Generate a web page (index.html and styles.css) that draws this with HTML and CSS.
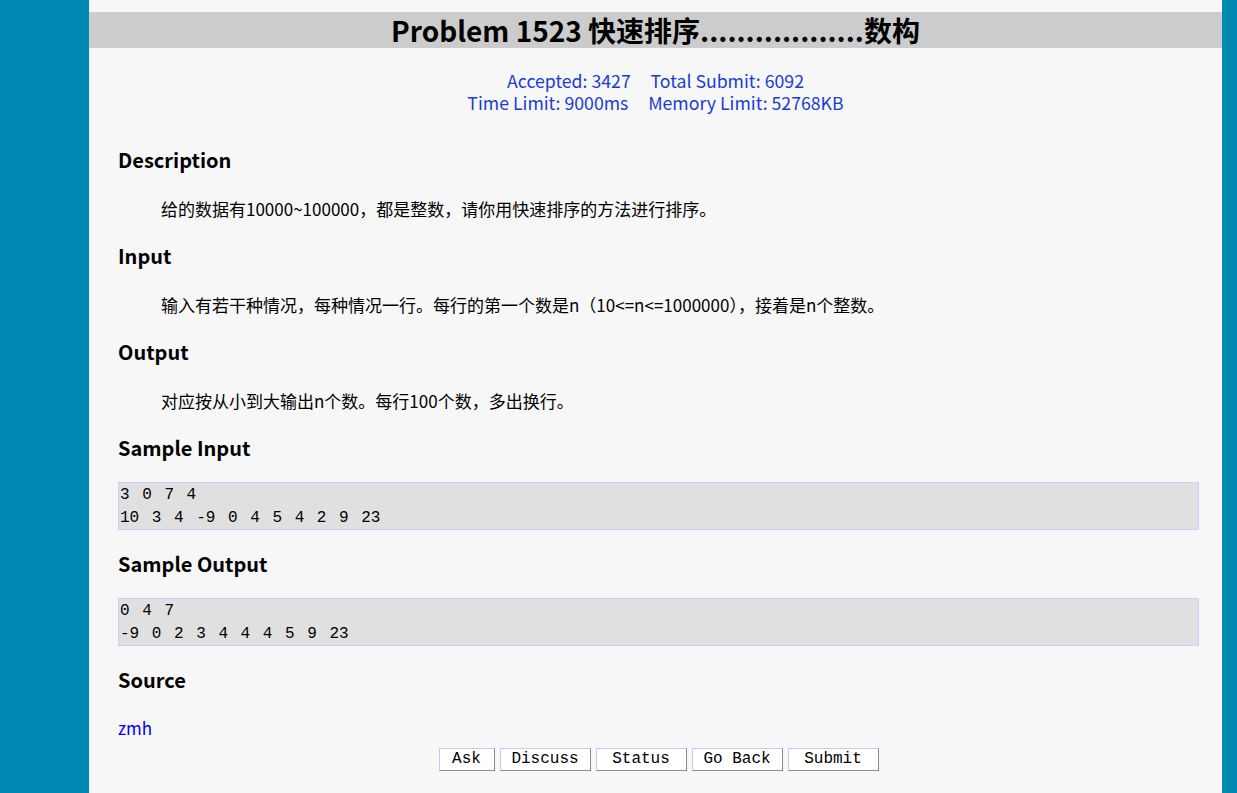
FILE: index.html
```html
<!DOCTYPE html>
<html lang="zh">
<head>
<meta charset="utf-8">
<title>Problem 1523</title>
<link rel="stylesheet" href="styles.css">
</head>
<body>
<div class="page">
  <div class="rail-left"></div>
  <main class="content">
    <h1 class="title">Problem 1523 快速排序..................数构</h1>
    <div class="stats">
      <div>Accepted: 3427&nbsp;&nbsp;&nbsp;&nbsp; Total Submit: 6092</div>
      <div>Time Limit: 9000ms&nbsp;&nbsp;&nbsp;&nbsp; Memory Limit: 52768KB</div>
    </div>
    <section class="sec">
      <h2 class="head">Description</h2>
      <p class="text">给的数据有10000~100000，都是整数，请你用快速排序的方法进行排序。</p>
      <h2 class="head">Input</h2>
      <p class="text">输入有若干种情况，每种情况一行。每行的第一个数是n（10&lt;=n&lt;=1000000），接着是n个整数。</p>
      <h2 class="head">Output</h2>
      <p class="text">对应按从小到大输出n个数。每行100个数，多出换行。</p>
      <h2 class="head">Sample Input</h2>
      <pre class="sample">3 0 7 4
10 3 4 -9 0 4 5 4 2 9 23</pre>
      <h2 class="head">Sample Output</h2>
      <pre class="sample">0 4 7
-9 0 2 3 4 4 4 5 9 23</pre>
      <h2 class="head">Source</h2>
      <a class="src" href="#">zmh</a>
    </section>
    <div class="buttons">
      <button class="btn btn-small">Ask</button>
      <button class="btn">Discuss</button>
      <button class="btn">Status</button>
      <button class="btn">Go Back</button>
      <button class="btn">Submit</button>
    </div>
  </main>
  <div class="rail-right"></div>
</div>
</body>
</html>
```
FILE: styles.css
```css
html, body {
  margin: 0;
  padding: 0;
  background: #0089b2;
  height: 100%;
}
.page {
  display: flex;
  min-height: 100%;
}
.rail-left { width: 89px; flex: none; }
.rail-right { width: 15px; flex: none; }
.content {
  width: 1133px;
  flex: none;
  background: #f7f7f7;
  padding-top: 12px;
  padding-bottom: 20px;
  font-family: "Noto Sans CJK SC", "Noto Sans", sans-serif;
  color: #000;
}
.title {
  margin: 0;
  height: 36px;
  line-height: 36px;
  background: #cccccc;
  text-align: center;
  font-size: 28px;
  font-weight: bold;
}
.stats {
  margin-top: 21px;
  text-align: center;
  color: #1a3cd6;
  font-size: 17.7px;
  line-height: 22px;
}
.sec {
  padding: 0 23px 0 29px;
  margin-top: 33px;
}
.head {
  margin: 0;
  font-size: 20px;
  line-height: 28px;
  font-weight: bold;
}
.text {
  margin: 23px 0 21px;
  padding-left: 43px;
  font-size: 17px;
  line-height: 24px;
}
.sample {
  margin: 20px 0 20px;
  background: #e0e0e0;
  border: 1px solid #ccccff;
  font-family: "Liberation Mono", monospace;
  font-size: 16px;
  line-height: 22.5px;
  white-space: pre;
  word-spacing: 3px;
  padding: 1px 0 0 1px;
}
.src {
  display: block;
  margin-top: 22px;
  color: #0000ff;
  text-decoration: none;
  font-size: 17px;
  line-height: 24px;
}
.buttons {
  margin-top: 8px;
  display: flex;
  justify-content: center;
  gap: 5px;
  padding-left: 6px;
}
.btn {
  font-family: "Liberation Mono", monospace;
  font-size: 16px;
  line-height: 21px;
  height: 23px;
  width: 91px;
  padding: 0;
  text-align: center;
  background: #fff;
  color: #000;
  border: 1px solid;
  border-color: #c8c8ff #8a8a8a #8a8a8a #c8c8ff;
  border-radius: 0;
}
.btn-small {
  width: 56px;
}
```
